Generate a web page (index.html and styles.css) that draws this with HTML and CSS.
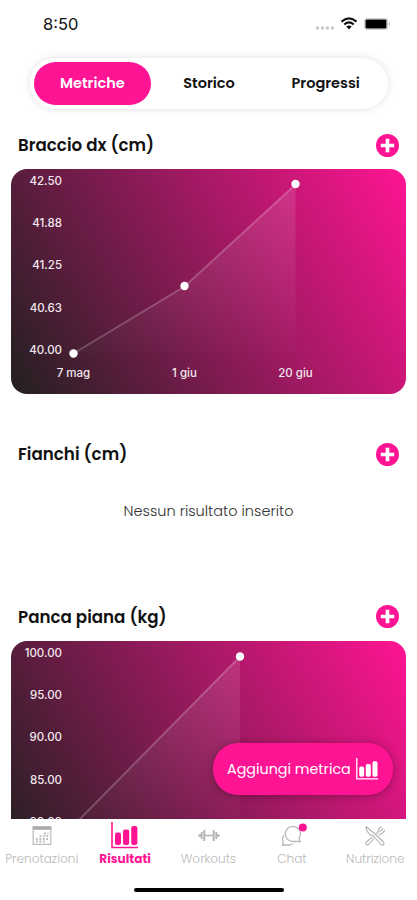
FILE: index.html
```
<!DOCTYPE html>
<html lang="it">
  <head>
    <meta charset="utf-8">
    <title>Risultati</title>
    <link rel="stylesheet" href="styles.css">
  </head>
  <body>
    <svg class="defs" width="0" height="0">
      <defs>
        <linearGradient id="card-bg" gradientUnits="userSpaceOnUse" x1="0" y1="225" x2="395" y2="0">
          <stop offset="0" stop-color="#222020"/>
          <stop offset="1" stop-color="#ff1493"/>
        </linearGradient>
        <linearGradient id="area-bg" gradientUnits="userSpaceOnUse" x1="0" y1="15" x2="0" y2="185">
          <stop offset="0" stop-color="#fff" stop-opacity="0.12"/>
          <stop offset="1" stop-color="#fff" stop-opacity="0.01"/>
        </linearGradient>
        <symbol id="plus" viewBox="0 0 24 24">
          <circle cx="12" cy="12" r="12" fill="#ff1493"/>
          <path d="M12 5v14M5 12h14" stroke="#fff" stroke-width="3.8"/>
        </symbol>
        <symbol id="bars" viewBox="0 0 27 27">
          <path d="M1 0v25.5h26" fill="none" stroke="currentColor" stroke-width="1.6"/>
          <rect x="4" y="10.5" width="6" height="12.5" rx="2" fill="currentColor"/>
          <rect x="12" y="7.5" width="6.2" height="15.5" rx="2" fill="currentColor"/>
          <rect x="20.2" y="4" width="6.2" height="19" rx="2" fill="currentColor"/>
        </symbol>
      </defs>
    </svg>

    <div class="screen">
      <header class="status">
        <span class="time">8:50</span>
        <svg class="status-icons" width="76" height="16" viewBox="0 0 76 16">
          <g fill="#c4c4c4">
            <rect x="1" y="10.5" width="3" height="3" rx="1"/>
            <rect x="6" y="10.5" width="3" height="3" rx="1"/>
            <rect x="11" y="10.5" width="3" height="3" rx="1"/>
            <rect x="16" y="10.5" width="3" height="3" rx="1"/>
          </g>
          <g fill="none" stroke="#111" stroke-width="2.1">
            <path d="M26.5 5.6Q34 -1 41.5 5.6"/>
            <path d="M29.3 8.5Q34 4.3 38.7 8.5"/>
          </g>
          <path d="M31.3 10.6Q34 8.3 36.7 10.6L34 13.5z" fill="#111"/>
          <rect x="49.5" y="2.500" width="23" height="11" rx="2" fill="#fff" stroke="#d0d0d0"/>
          <rect x="50.5" y="3.5" width="21" height="9" rx="1" fill="#000"/>
          <path d="M74 6q2 2 0 4z" fill="#aaa"/>
        </svg>
      </header>

      <nav class="segments">
        <a class="segment active">Metriche</a>
        <a class="segment">Storico</a>
        <a class="segment">Progressi</a>
      </nav>

      <main class="metrics">
        <section class="metric">
          <div class="metric-head">
            <h2>Braccio dx (cm)</h2>
            <svg class="plus"><use href="#plus"/></svg>
          </div>
          <svg class="chart" viewBox="0 0 395 225">
            <rect width="395" height="225" fill="url(#card-bg)"/>
            <path d="M62.5 184.5L173.5 117.5L284.5 15.5V184.5z" fill="url(#area-bg)"/>
            <path class="line" d="M62.5 184.5L173.5 117.5L284.5 15.5"/>
            <g class="dots">
              <circle cx="62.5" cy="184.5" r="4.2"/>
              <circle cx="173.5" cy="117" r="4.2"/>
              <circle cx="284.5" cy="15" r="4.2"/>
            </g>
            <g class="y-labels">
              <text x="51" y="15.5">42.50</text>
              <text x="51" y="58">41.88</text>
              <text x="51" y="100">41.25</text>
              <text x="51" y="142.500">40.63</text>
              <text x="51" y="184.500">40.00</text>
            </g>
            <g class="x-labels">
              <text x="62.5" y="208">7 mag</text>
              <text x="173.5" y="208">1 giu</text>
              <text x="284.5" y="208">20 giu</text>
            </g>
          </svg>
        </section>

        <section class="metric">
          <div class="metric-head">
            <h2>Fianchi (cm)</h2>
            <svg class="plus"><use href="#plus"/></svg>
          </div>
          <p class="empty">Nessun risultato inserito</p>
        </section>

        <section class="metric">
          <div class="metric-head">
            <h2>Panca piana (kg)</h2>
            <svg class="plus"><use href="#plus"/></svg>
          </div>
          <svg class="chart" viewBox="0 0 395 225">
            <rect width="395" height="225" fill="url(#card-bg)"/>
            <path d="M62.5 184.5L229 15.5V184.5z" fill="url(#area-bg)"/>
            <path class="line" d="M62.5 184.5L229 15.5"/>
            <g class="dots">
              <circle cx="229" cy="15.5" r="4.2"/>
            </g>
            <g class="y-labels">
              <text x="51" y="15.5">100.00</text>
              <text x="51" y="58">95.00</text>
              <text x="51" y="100">90.00</text>
              <text x="51" y="142.5">85.00</text>
              <text x="51" y="184.5">80.00</text>
            </g>
          </svg>
        </section>
      </main>

      <button class="fab">
        <span>Aggiungi metrica</span>
        <svg width="22" height="22"><use href="#bars"/></svg>
      </button>

      <footer class="tabbar">
        <div class="tabs">
          <a class="tab">
            <svg width="28" height="28" viewBox="0 0 28 28">
              <path d="M4.5 6h19" stroke="#aaa" stroke-width="3.6"/>
              <path d="M5.2 7.500v14.800h17.600V7.500" fill="none" stroke="#bbb" stroke-width="1.200"/>
              <path d="M16 11.500h4.500M11.500 14.200h9M8 17h12.500M8 19.500h9" stroke="#bbb" stroke-width="1.800" stroke-dasharray="1.800 1.600"/>
            </svg>
            <span>Prenotazioni</span>
          </a>
          <a class="tab active">
            <svg width="28" height="28" viewBox="0 0 28 28"><use href="#bars" width="27" height="27"/></svg>
            <span>Risultati</span>
          </a>
          <a class="tab">
            <svg width="28" height="28" viewBox="0 0 28 28" fill="#b4b4b4">
              <rect x="3.500" y="12.300" width="2.500" height="2.500"/>
              <rect x="5.800" y="10" width="1.800" height="7"/>
              <rect x="8.300" y="8" width="2" height="11"/>
              <rect x="10" y="12.800" width="8" height="1.500"/>
              <rect x="17.700" y="8" width="2" height="11"/>
              <rect x="20.400" y="10" width="1.800" height="7"/>
              <rect x="22" y="12.300" width="2.500" height="2.500"/>
            </svg>
            <span>Workouts</span>
          </a>
          <a class="tab">
            <svg width="28" height="28" viewBox="0 0 28 28" fill="none" stroke="#b8b8b8" stroke-width="1.300">
              <path d="M21 16.500L22.300 19.500H15A7.600 7.600 0 1 1 22.500 11.500Q22.500 14.500 21 16.500z"/>
              <path d="M6 13.500Q3.500 16 5.200 19.500L4.500 23H11.500Q13.500 23 14.500 21.500"/>
              <circle cx="24.800" cy="5.500" r="4" fill="#ff1493" stroke="none"/>
            </svg>
            <span>Chat</span>
          </a>
          <a class="tab">
            <svg width="28" height="28" viewBox="0 0 28 28" fill="none" stroke="#b0b0b0" stroke-width="1.100" stroke-linejoin="round">
              <path d="M5 4.500Q5 9.500 9.500 13L12 13.500L20 22.500Q22 24 23 22Q23.500 21 22 19.500L14 12z"/>
              <path d="M11.500 15L5.500 20Q4 21.500 5.500 22.800Q7 23.500 8 22L13 16.500"/>
              <path d="M15.500 11.500L17 10Q16.500 7 20.500 4.500M17.800 13.200L19 12Q22 12 23.800 8M18.500 9.800L22 6.200"/>
            </svg>
            <span>Nutrizione</span>
          </a>
        </div>
        <div class="home-indicator"></div>
      </footer>
    </div>
  </body>
</html>
```
FILE: styles.css
```
* {
  box-sizing: border-box;
}

body {
  margin: 0;
  background: #fff;
  color: #111;
  font-family: Poppins, Inter, "Open Sans", sans-serif;
}

.defs {
  position: absolute;
}

.screen {
  position: relative;
  display: flex;
  flex-direction: column;
  width: 417px;
  height: 900px;
  overflow: hidden;
}

.status {
  display: flex;
  flex: none;
  align-items: center;
  justify-content: space-between;
  height: 58px;
  padding: 0 26px 10px 43px;
}

.time {
  font-family: Inter, sans-serif;
  font-size: 16.5px;
}

.segments {
  display: flex;
  flex: none;
  width: 358px;
  height: 51px;
  margin-left: 30px;
  padding: 4px;
  border-radius: 26px;
  background: #fff;
  box-shadow: 0 0 8px rgba(0, 0, 0, 0.12);
}

.segment {
  flex: 1;
  border-radius: 22px;
  font-size: 14.5px;
  font-weight: 600;
  line-height: 43px;
  text-align: center;
}

.segment.active {
  background: #ff1493;
  color: #fff;
}

.metrics {
  flex: 1;
  min-height: 0;
  padding: 12px 11px 0;
  overflow: hidden;
}

.metric {
  margin-bottom: 36px;
}

.metric-head {
  display: flex;
  align-items: center;
  justify-content: space-between;
  height: 48px;
  padding: 0 7px;
}

h2 {
  margin: 0;
  font-size: 16.7px;
  font-weight: 600;
  line-height: 24px;
  white-space: nowrap;
}

.plus {
  width: 23px;
  height: 23px;
}

.chart {
  display: block;
  width: 395px;
  height: 225px;
  border-radius: 16px;
}

.chart text {
  fill: #f3e8ee;
  font-family: Inter, sans-serif;
  font-size: 11.5px;
  font-weight: 500;
}

.line {
  fill: none;
  stroke: #fff;
  stroke-opacity: 0.22;
  stroke-width: 2;
}

.dots {
  fill: #fff;
}

.y-labels {
  text-anchor: end;
}

.x-labels {
  text-anchor: middle;
}

.empty {
  height: 78.5px;
  margin: 0;
  color: #333;
  font-size: 14.5px;
  font-weight: 300;
  line-height: 66px;
  text-align: center;
}

.fab {
  position: absolute;
  top: 743px;
  right: 24px;
  display: flex;
  align-items: center;
  justify-content: space-between;
  width: 180px;
  height: 52px;
  padding: 0 15px 0 14px;
  border: 0;
  border-radius: 25px;
  background: #ff1493;
  box-shadow: 0 1px 8px rgba(0, 0, 0, 0.3);
  color: #fff;
  font-family: inherit;
  font-size: 14.3px;
  white-space: nowrap;
}

.tabbar {
  flex: none;
  height: 81.5px;
  background: #fff;
}

.tabs {
  display: flex;
}

.tab {
  display: flex;
  flex: 1 1 0;
  flex-direction: column;
  align-items: center;
  min-width: 0;
  padding-top: 3px;
  color: #b9b9b9;
  font-size: 12.1px;
  font-weight: 300;
  line-height: 18px;
}

.tab svg {
  overflow: visible;
}

.tab.active {
  color: #ff1493;
  font-weight: 700;
}

.home-indicator {
  width: 150px;
  height: 4px;
  margin: 20px auto 0;
  border-radius: 2px;
  background: #000;
}
```
